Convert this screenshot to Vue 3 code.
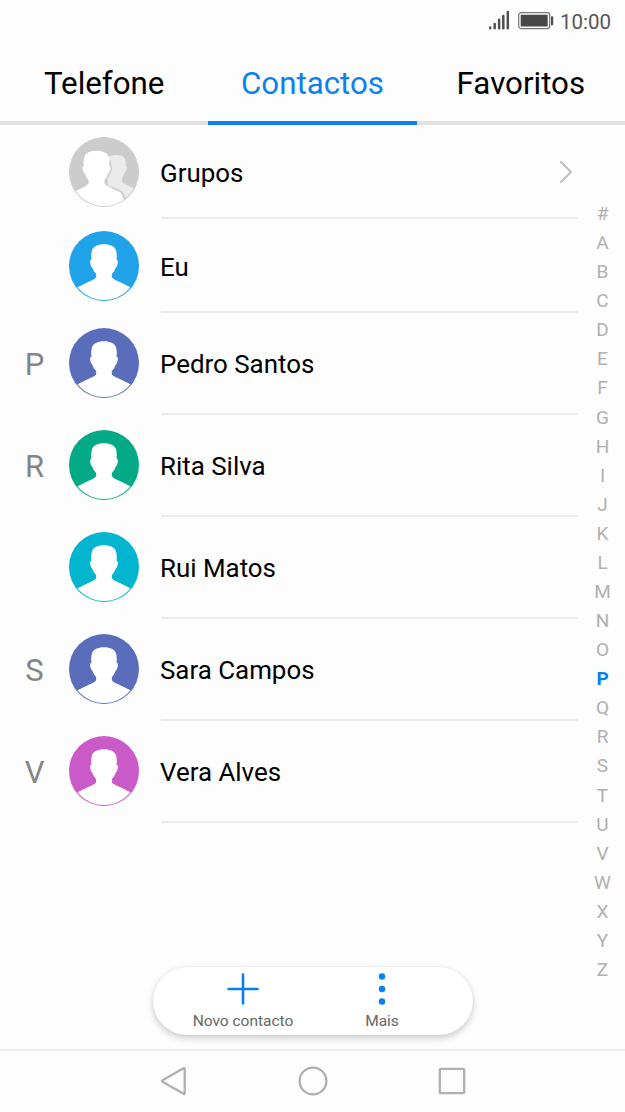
<script setup>
const tabs = [
  { label: 'Telefone', active: false },
  { label: 'Contactos', active: true },
  { label: 'Favoritos', active: false },
]
const rows = [
  { id: 1, letter: '', name: 'Grupos', color: '#cccccc', group: true, short: true },
  { id: 2, letter: '', name: 'Eu', color: '#21a3ea', short: true },
  { id: 3, letter: 'P', name: 'Pedro Santos', color: '#5a6dbb' },
  { id: 4, letter: 'R', name: 'Rita Silva', color: '#04aa87' },
  { id: 5, letter: '', name: 'Rui Matos', color: '#03b5cf' },
  { id: 6, letter: 'S', name: 'Sara Campos', color: '#5a6dbb' },
  { id: 7, letter: 'V', name: 'Vera Alves', color: '#cb5ac9' },
]
const index = '#ABCDEFGHIJKLMNOPQRSTUVWXYZ'.split('')
</script>

<template>
  <div class="screen">
    <header class="status">
      <svg class="signal" width="22" height="20" viewBox="0 0 22 20">
        <path d="M2.2 18.300v-.8M6.700 18.300v-4.300M11.100 18.300v-8.500M15.300 18.300v-12.300M19.800 18.300V2" fill="none" stroke="#505050" stroke-width="2.500" stroke-linecap="round" />
      </svg>
      <svg class="battery" width="36" height="18" viewBox="0 0 36 18">
        <rect x=".7" y=".7" width="31" height="16" rx="2.6" fill="#fdfdfd" stroke="#777" stroke-width="1.2" />
        <rect x="2.7" y="2.8" width="27" height="11.8" rx=".6" fill="#484848" />
        <path d="M33 4.200h1.200q1 0 1 1v7q0 1-1 1H33z" fill="#505050" />
      </svg>
      <span class="clock">10:00</span>
    </header>

    <nav class="tabs">
      <div v-for="t in tabs" :key="t.label" class="tab" :class="{ active: t.active }"><span>{{ t.label }}</span></div>
    </nav>

    <div class="body">
      <main class="list">
        <div v-for="r in rows" :key="r.id" class="row" :class="{ short: r.short }">
          <span class="letter">{{ r.letter }}</span>
          <svg class="avatar" width="70" height="70" viewBox="0 0 70 70">
            <defs>
              <clipPath :id="'clip' + r.id"><circle cx="35" cy="35" r="34.1" /></clipPath>
            </defs>
            <circle cx="35" cy="35" r="35" :fill="r.color" />
            <g v-if="r.group" :clip-path="'url(#clip' + r.id + ')'">
              <path d="M38 21C41 17.500 53 16.500 56 21.500Q57 24 56.700 28.500Q58.500 29 57.500 32.500Q57 35 55.500 35.500Q54.800 39 52.900 41.500V44.500Q53.500 46.500 63.500 50.500L75 54V75H38z" fill="#ebebeb" />
              <path d="M41 22Q42.700 26 42.200 29Q43.500 32 41.800 35.500Q40.500 38 38.500 42L39 48.500Q51 52 54.500 56Q56 59 57 64L45 72H30z" fill="#cccccc" />
              <path d="M27.500 13.800C34.500 13.800 38.500 16 39.800 20.500Q40.800 24 40.200 28.800Q41.700 29.500 41.300 32.300Q40.700 36 39 37Q38 40.500 35.400 43.500V46Q35.800 48.500 50.500 54.800Q53.500 56.500 55 64L45 75H0V57Q2 56 7 53.700Q19.200 48.500 19.600 46V43.500Q17 40.500 16 37Q14.300 36 13.700 32.300Q13.300 29.500 14.800 28.800Q14.200 24 15.200 20.500C16.500 16 20.500 13.800 27.500 13.800z" fill="#fff" />
            </g>
            <path v-else :clip-path="'url(#clip' + r.id + ')'" d="M35 13.300C41.500 13.300 46 15.500 47.200 20Q48.200 24 47.500 28.500Q49.300 29.200 48.800 32Q48.200 36 46.700 36.800Q45.500 40.500 42.800 43.300V45.800Q43.200 48 50.800 51L61.400 56.300L75 62V75H-5V62L8.600 56.300L19.200 51Q26.800 48 27.200 45.800V43.300Q24.500 40.500 23.300 36.800Q21.800 36 21.200 32Q20.700 29.200 22.500 28.500Q21.800 24 22.800 20C24 15.500 28.500 13.300 35 13.300z" fill="#fff" />
          </svg>
          <div class="entry">
            <span class="name">{{ r.name }}</span>
            <svg v-if="r.group" class="chevron" width="16" height="24" viewBox="0 0 16 24">
              <path d="M3 2l10 10L3 22" fill="none" stroke="#c3c3c3" stroke-width="2.300" stroke-linecap="round" stroke-linejoin="round" />
            </svg>
          </div>
        </div>
      </main>
      <aside class="index">
        <span v-for="c in index" :key="c" :class="{ current: c === 'P' }">{{ c }}</span>
      </aside>
    </div>

    <div class="actions">
      <div class="action">
        <svg width="32" height="32" viewBox="0 0 32 32"><path d="M16 1.500v29M1.500 16h29" stroke="#077ff5" stroke-width="2.600" stroke-linecap="round" /></svg>
        <span>Novo contacto</span>
      </div>
      <div class="action">
        <svg width="32" height="32" viewBox="0 0 32 32" fill="#077ff5"><circle cx="16" cy="3.500" r="3.200" /><circle cx="16" cy="16" r="3.200" /><circle cx="16" cy="28.500" r="3.200" /></svg>
        <span>Mais</span>
      </div>
    </div>

    <footer class="navbar">
      <svg width="30" height="30" viewBox="0 0 30 30"><path d="M3.500 14.300L24.500 2.300q1.200-.5 1.200.8v24q0 1.300-1.200.7L3.500 15.700q-1-.7 0-1.400z" /></svg>
      <svg width="30" height="30" viewBox="0 0 30 30"><circle cx="15" cy="15" r="13.400" /></svg>
      <svg width="30" height="30" viewBox="0 0 30 30"><rect x="2.800" y="2.800" width="24.400" height="24.400" rx="1" /></svg>
    </footer>
  </div>
</template>

<style>
body { margin: 0; background: #fdfdfd; }
</style>

<style scoped>
.screen { width: 625px; height: 1112px; display: flex; flex-direction: column; background: #fdfdfd; font-family: Roboto, sans-serif; color: #000; overflow: hidden; }
.status { height: 43px; box-sizing: border-box; padding: 0 14px 0 0; display: flex; justify-content: flex-end; align-items: center; flex: none; }
.signal { margin-right: 8px; margin-top: -3px; }
.battery { margin-right: 6px; margin-top: -2px; }
.clock { font-size: 20.5px; color: #555; line-height: 24px; }
.tabs { display: flex; height: 82px; flex: none; }
.tab { flex: 1; box-sizing: border-box; border-bottom: 4px solid #e1e1e1; font-size: 31.3px; line-height: 82px; height: 82px; text-align: center; white-space: nowrap; }
.tab.active { color: #0d80ee; border-color: #0d80ee; }
.body { flex: none; display: flex; height: 841px; }
.list { width: 578px; }
.row { height: 102px; display: flex; align-items: center; }
.row.short { height: 94px; }
.letter { width: 69px; box-sizing: border-box; text-align: center; font-size: 31px; color: #858585; }
.avatar { flex: none; margin-top: -2px; }
.row.short .avatar { margin-top: 0; }
.entry { margin-left: 22px; flex: 1; height: 100%; box-sizing: border-box; border-bottom: 2px solid #ececec; display: flex; align-items: center; justify-content: space-between; }
.name { font-size: 25.9px; margin-left: -1px; padding-top: 2px; }
.short .name { padding-top: 4px; }
.chevron { margin: 2px 4px 0 0; }
.index { width: 47px; box-sizing: border-box; padding-top: 74px; display: flex; flex-direction: column; align-items: center; font-size: 19px; color: #b0b0b0; }
.index span { height: 29.09px; line-height: 29.09px; flex: none; margin-left: 2px; }
.index .current { color: #077ff5; font-weight: 700; }
.actions { width: 320px; height: 68px; flex: none; align-self: center; margin-top: 1px; border-radius: 34px; background: #fff; box-shadow: 0 3px 7px rgba(0, 0, 0, .2), 0 0 2px rgba(0, 0, 0, .08); display: flex; justify-content: center; }
.action { width: 139px; display: flex; flex-direction: column; align-items: center; padding-top: 6px; font-size: 15.5px; line-height: 18px; color: #666; box-sizing: border-box; }
.action span { margin-top: 7px; }
.navbar { margin-top: 14px; height: 63px; box-sizing: border-box; border-top: 2px solid #ebebeb; display: flex; justify-content: center; align-items: center; gap: 109px; padding: 0 0 2px 0; }
.navbar svg { fill: none; stroke: #b0b0b0; stroke-width: 2.3; }
</style>
